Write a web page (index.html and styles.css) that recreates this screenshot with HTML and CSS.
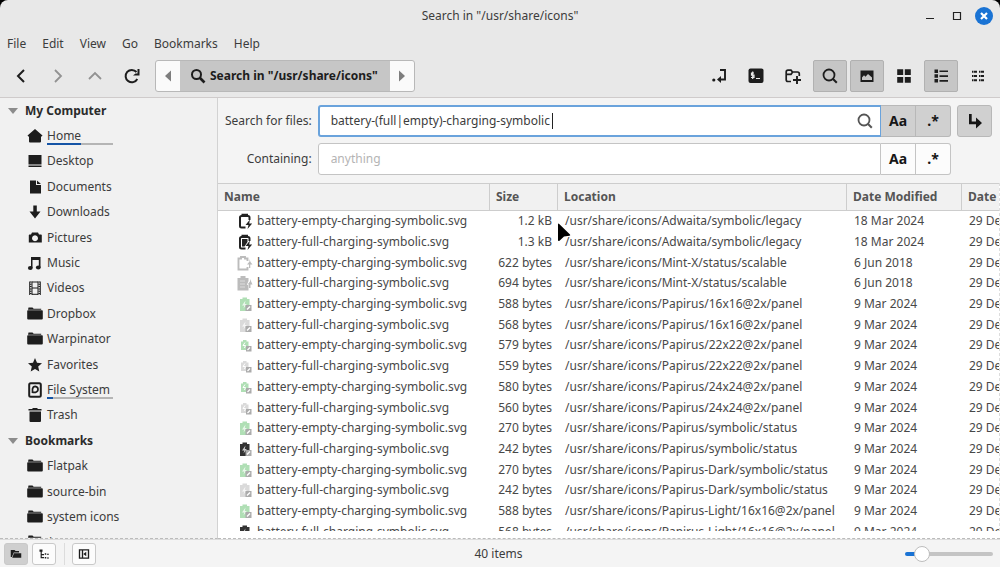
FILE: index.html
```
<!DOCTYPE html>
<html lang="en">
<head>
    <meta charset="UTF-8">
    <meta name="viewport" content="width=device-width, initial-scale=1.0">
    <title>Search in "/usr/share/icons"</title>
    <link rel="stylesheet" href="styles.css">
</head>
<body>
    <!-- shared icons -->
    <svg class="sprite" aria-hidden="true">
        <symbol id="folder" viewBox="0 0 16 16"><path d="M1.500 1.500h4l1.200 1.200h7.500v1.100H1z"/><path d="M1 4.300h14q.8 0 .8.800v7.400q0 1-1 1H1.200q-1 0-1-1V5.100q0-.8.800-.8z"/></symbol>
        <symbol id="search" viewBox="0 0 16 16"><circle cx="7" cy="7" r="5.500" fill="none" stroke="currentColor" stroke-width="1.800"/><path d="M10.800 10.800l4 4" stroke="currentColor" stroke-width="2"/></symbol>
        <symbol id="adw-empty" viewBox="0 0 16 16"><path d="M8.500 14.500H4.500Q3 14.500 3 13V4.500Q3 3 4.500 3h6.500Q12.500 3 12.500 4.500V7" fill="none" stroke="currentColor" stroke-width="2"/><path d="M4.500.8h6.500v2.500H4.500zM13 6.500L8.500 12h3l-1 4 4.700-5.500h-3z"/></symbol>
        <symbol id="adw-full" viewBox="0 0 16 16"><path d="M8.500 14.500H4.500Q3 14.500 3 13V4.500Q3 3 4.500 3h6.500Q12.500 3 12.500 4.500V7" fill="none" stroke="currentColor" stroke-width="2"/><path d="M4.500.8h6.500v2.500H4.500zM5 5h5.500v3l-3 4.500H5zM13 6.500L8.500 12h3l-1 4 4.700-5.500h-3z"/></symbol>
        <symbol id="mint-empty" viewBox="0 0 16 16"><path d="M8 14.500H1.500V3.500H4V2h4v1.500h2.500V6M10.500 12v2.500H8" fill="none" stroke="currentColor" stroke-width="1.900"/><path d="M12.500 4v2.500l-2.500 3h2v3.500h1.300V9.500H15.500l-2-2.500z"/></symbol>
        <symbol id="mint-full" viewBox="0 0 16 16"><path d="M.5 3H3.500V1h5v2h3v3l-1.700 4h1.700v5.500H.5z"/><path d="M3 6h5M3 9h5M3 12h5" stroke="#fff" stroke-width=".5"/><path d="M13 4v2.500l-2.500 3H12V13h1.500V9.500H15.500z"/></symbol>
        <symbol id="pap" viewBox="0 0 16 16"><path d="M3 3h2.500V1.500h4.500V3h2.500v12H3z"/><path d="M8.500 4.500L5 9.500h2.300L6.500 12.500l3.300-4.500H7.800z" fill="#fff" opacity=".75"/><path d="M8.500 9h6v6h-6z" fill="#ababab"/><path d="M10 13.500l3-3" stroke="#fff" stroke-width="1.400"/></symbol>
        <symbol id="pap-small" viewBox="0 0 16 16"><path d="M4 4.500h2V3h3.500v1.500h2V13H4z"/><path d="M8 5.500L6 8.500h2.500L7.500 11" stroke="#fff" fill="none"/><path d="M9 9h5.500v5.500H9z" fill="#ababab"/><path d="M10.500 13l2.500-2.500" stroke="#fff" stroke-width="1.300"/></symbol>
    </svg>

    <div class="window">
        <header class="titlebar">
            <h1>Search in "/usr/share/icons"</h1>
            <div class="window-controls">
                <button aria-label="Minimize"><svg viewBox="0 0 16 16"><path d="M4 10.500h8" stroke="currentColor"/></svg></button>
                <button aria-label="Maximize"><svg viewBox="0 0 16 16"><path d="M4.500 4.500h7v7h-7z" fill="none" stroke="currentColor" stroke-width="1.200"/></svg></button>
                <button class="close" aria-label="Close"><svg viewBox="0 0 16 16"><path d="M5 5l6 6M11 5l-6 6" stroke="currentColor" stroke-width="2.200"/></svg></button>
            </div>
        </header>

        <nav class="menubar">
            <button>File</button>
            <button>Edit</button>
            <button>View</button>
            <button>Go</button>
            <button>Bookmarks</button>
            <button>Help</button>
        </nav>

        <div class="toolbar">
            <div class="tools">
                <button class="tool" aria-label="Back"><svg viewBox="0 0 16 16"><path d="M11 2L5 8l6 6" fill="none" stroke="currentColor" stroke-width="2"/></svg></button>
                <button class="tool dim" aria-label="Forward"><svg viewBox="0 0 16 16"><path d="M5 2l6 6-6 6" fill="none" stroke="currentColor" stroke-width="1.800"/></svg></button>
                <button class="tool dim" aria-label="Up"><svg viewBox="0 0 16 16"><path d="M2 11l6-6 6 6" fill="none" stroke="currentColor" stroke-width="1.800"/></svg></button>
                <button class="tool" aria-label="Reload"><svg viewBox="0 0 16 16"><path d="M13.300 11A6.200 6.200 0 1 1 12.500 4" fill="none" stroke="currentColor" stroke-width="2"/><path d="M15.500 1v6.500H9l2.500-2h2V1z"/></svg></button>
            </div>
            <div class="pathbar">
                <button class="arrow" aria-label="Scroll left"><svg viewBox="0 0 16 16"><path d="M11 2.500v11L5 8z"/></svg></button>
                <button class="crumb"><svg viewBox="0 0 16 16"><circle cx="6.500" cy="6.500" r="4.500" fill="none" stroke="currentColor" stroke-width="2"/><path d="M9.500 9.500l5 5" stroke="currentColor" stroke-width="2.600"/></svg>Search in "/usr/share/icons"</button>
                <button class="arrow" aria-label="Scroll right"><svg viewBox="0 0 16 16"><path d="M5 2.500v11L11 8z"/></svg></button>
            </div>
            <div class="tools right">
                <button class="tool" aria-label="Toggle location entry"><svg viewBox="0 0 16 16"><path d="M9 2h5v9.500H8" fill="none" stroke="currentColor" stroke-width="1.900"/><path d="M10 8v7l-4-3.500z"/><circle cx="2.800" cy="12" r="1.600"/></svg></button>
                <button class="tool" aria-label="Open in terminal"><svg viewBox="0 0 16 16"><rect x=".5" y=".5" width="15" height="14.500" rx="2"/><path d="M6 5H3.500v2.200H6v2.300H3M4.700 3.500v7.500M8 10.500h4" fill="none" stroke="#e8e8e8" stroke-width="1.200"/></svg></button>
                <button class="tool" aria-label="New folder"><svg viewBox="0 0 16 16"><path d="M6 13.500H3Q1.200 13.500 1.200 11.800V4Q1.200 2.200 3 2.200H6L7.500 4h5Q14.300 4 14.300 5.800V8M1.500 6.300H6l1.500-2" fill="none" stroke="currentColor" stroke-width="1.700"/><path d="M12 8v8M8 12h8" stroke="currentColor" stroke-width="1.900"/></svg></button>
                <button class="tool on" aria-label="Search"><svg viewBox="0 0 16 16"><use href="#search"/></svg></button>
                <button class="tool on" aria-label="Show thumbnails"><svg viewBox="0 0 16 16"><path d="M1.500 2.500h13v11.500h-13z"/><path d="M3 12V9.500l2-2.200 1.500 1.500L9 6l4 3.500V12z" fill="#c6c6c6"/></svg></button>
                <button class="tool" aria-label="Icon view"><svg viewBox="0 0 16 16"><path d="M1.200 1.200h6V7h-6zM8.800 1.200h6V7h-6zM1.200 9h6v5.800h-6zM8.800 9h6v5.800h-6z"/></svg></button>
                <button class="tool on" aria-label="List view"><svg viewBox="0 0 16 16"><path d="M1.500 1.500h3.500V5H1.500zM1.500 6.300h3.500v3.500H1.500zM1.500 11h3.500v3.500H1.500zM6.500 2.400h8.500v1.700H6.500zM6.500 7.200h8.500v1.700H6.500zM6.500 12h8.500v1.700H6.500z"/></svg></button>
                <button class="tool" aria-label="Compact view"><svg viewBox="0 0 16 16"><path d="M2 3.700h5M9 3.700h5M2 8h5M9 8h5M2 12.300h5M9 12.300h5" stroke="currentColor" stroke-width="1.900" stroke-dasharray="1.500 .5 3 9"/></svg></button>
            </div>
        </div>

        <div class="content">
            <aside class="sidebar">
                <div class="places">
                    <h2>My Computer</h2>
                    <a href="#"><svg viewBox="0 0 16 16"><path d="M8 1l7.500 6.500-.8 1H14v5q0 1-1 1H3q-1 0-1-1v-5H1.300l-.8-1z"/></svg><span>Home</span><i class="usage"><i style="width: 51%"></i></i></a>
                    <a href="#"><svg viewBox="0 0 16 16"><path d="M1.500 2h13v9.500h-13zM1.500 12.500h13V14h-13z"/></svg><span>Desktop</span></a>
                    <a href="#"><svg viewBox="0 0 16 16"><path d="M3 1.500h6V6h5v8.500H3zM10 1.500L14 5h-4z"/></svg><span>Documents</span></a>
                    <a href="#"><svg viewBox="0 0 16 16"><path d="M6.300 1.500h3.500v6H13.500L8 14.500 2.500 7.500h3.800z"/></svg><span>Downloads</span></a>
                    <a href="#"><svg viewBox="0 0 16 16"><path fill-rule="evenodd" d="M5 2.500h6L12 4.500h2q.8 0 .8.800v7.200h-13V5.300q0-.8.800-.8H4zM8 5.300a3 3 0 1 0 .01 0z"/></svg><span>Pictures</span></a>
                    <a href="#"><svg viewBox="0 0 16 16"><path d="M4 2h9.500v10.500h-1.700V5H5.500v8H4z"/><ellipse cx="3.300" cy="13" rx="2.400" ry="1.900"/><ellipse cx="11.300" cy="12.500" rx="2.400" ry="1.900"/></svg><span>Music</span></a>
                    <a href="#"><svg viewBox="0 0 16 16"><path d="M2.700 1.500v13.500M13.300 1.500v13.500M5 1.500v13.500M11 1.500v13.500M5 2h6M5 8h6M5 14.300h6" fill="none" stroke="currentColor"/><path d="M3.800 1.500v13.500M12.200 1.500v13.500" stroke="currentColor" stroke-width="1.600" stroke-dasharray="1 1.300"/></svg><span>Videos</span></a>
                    <a href="#"><svg><use href="#folder"/></svg><span>Dropbox</span></a>
                    <a href="#"><svg><use href="#folder"/></svg><span>Warpinator</span></a>
                    <a href="#"><svg viewBox="0 0 16 16"><path d="M8 1l2 4.700 5 .5-3.800 3.400 1.100 5L8 12l-4.300 2.600 1.100-5L1 6.200l5-.5z"/></svg><span>Favorites</span></a>
                    <a href="#"><svg viewBox="0 0 16 16"><rect x="2.200" y="1.200" width="11.600" height="13.600" rx="1.500" fill="none" stroke="currentColor" stroke-width="2"/><path d="M5.500 11V7Q6 4.300 8.300 4.300q2.700.3 2.700 3 0 2.500-2.500 3H5.500" fill="none" stroke="currentColor" stroke-width="1.700"/></svg><span>File System</span><i class="usage"><i style="width: 9%"></i></i></a>
                    <a href="#"><svg viewBox="0 0 16 16"><path d="M5.500 1h5v1h4v1.500h-13V2h4zM2.500 4.500h11.500V14q0 1-1 1H3.500q-1 0-1-1z"/></svg><span>Trash</span></a>
                    <h2>Bookmarks</h2>
                    <a href="#"><svg><use href="#folder"/></svg><span>Flatpak</span></a>
                    <a href="#"><svg><use href="#folder"/></svg><span>source-bin</span></a>
                    <a href="#"><svg><use href="#folder"/></svg><span>system icons</span></a>
                    <a href="#"><svg><use href="#folder"/></svg><span>/</span></a>
                </div>
            </aside>

            <main class="main">
                <form class="search">
                    <label for="files">Search for files:</label>
                    <div class="field">
                        <div class="entry focused">
                            <input type="text" id="files" value="battery-(full|empty)-charging-symbolic">
                            <span class="caret"></span>
                            <svg viewBox="0 0 16 16"><use href="#search"/></svg>
                        </div>
                        <button type="button" class="option on">Aa</button>
                        <button type="button" class="option on last">.*</button>
                        <button type="button" class="option on recurse" aria-label="Search subfolders"><svg viewBox="0 0 16 16"><path d="M2 1h2.700v7.500H9V4.500l6 5.500-6 5.500v-4.200H2z"/></svg></button>
                    </div>
                    <label for="containing">Containing:</label>
                    <div class="field">
                        <div class="entry">
                            <input type="text" id="containing" placeholder="anything">
                        </div>
                        <button type="button" class="option">Aa</button>
                        <button type="button" class="option last">.*</button>
                    </div>
                </form>

                <div class="files">
                    <table>
                        <colgroup>
                            <col class="col-name"><col class="col-size"><col class="col-location"><col class="col-date"><col>
                        </colgroup>
                        <thead>
                            <tr><th>Name</th><th>Size</th><th>Location</th><th>Date Modified</th><th>Date</th></tr>
                        </thead>
                        <tbody>
                            <tr><td><svg><use href="#adw-empty"/></svg>battery-empty-charging-symbolic.svg</td><td>1.2 kB</td><td>/usr/share/icons/Adwaita/symbolic/legacy</td><td>18 Mar 2024</td><td>29 Dec</td></tr>
                            <tr><td><svg><use href="#adw-full"/></svg>battery-full-charging-symbolic.svg</td><td>1.3 kB</td><td>/usr/share/icons/Adwaita/symbolic/legacy</td><td>18 Mar 2024</td><td>29 Dec</td></tr>
                            <tr><td><svg class="grey"><use href="#mint-empty"/></svg>battery-empty-charging-symbolic.svg</td><td>622 bytes</td><td>/usr/share/icons/Mint-X/status/scalable</td><td>6 Jun 2018</td><td>29 Dec</td></tr>
                            <tr><td><svg class="grey"><use href="#mint-full"/></svg>battery-full-charging-symbolic.svg</td><td>694 bytes</td><td>/usr/share/icons/Mint-X/status/scalable</td><td>6 Jun 2018</td><td>29 Dec</td></tr>
                            <tr><td><svg class="green"><use href="#pap"/></svg>battery-empty-charging-symbolic.svg</td><td>588 bytes</td><td>/usr/share/icons/Papirus/16x16@2x/panel</td><td>9 Mar 2024</td><td>29 Dec</td></tr>
                            <tr><td><svg class="pale"><use href="#pap"/></svg>battery-full-charging-symbolic.svg</td><td>568 bytes</td><td>/usr/share/icons/Papirus/16x16@2x/panel</td><td>9 Mar 2024</td><td>29 Dec</td></tr>
                            <tr><td><svg class="green"><use href="#pap-small"/></svg>battery-empty-charging-symbolic.svg</td><td>579 bytes</td><td>/usr/share/icons/Papirus/22x22@2x/panel</td><td>9 Mar 2024</td><td>29 Dec</td></tr>
                            <tr><td><svg class="pale"><use href="#pap-small"/></svg>battery-full-charging-symbolic.svg</td><td>559 bytes</td><td>/usr/share/icons/Papirus/22x22@2x/panel</td><td>9 Mar 2024</td><td>29 Dec</td></tr>
                            <tr><td><svg class="green"><use href="#pap-small"/></svg>battery-empty-charging-symbolic.svg</td><td>580 bytes</td><td>/usr/share/icons/Papirus/24x24@2x/panel</td><td>9 Mar 2024</td><td>29 Dec</td></tr>
                            <tr><td><svg class="pale"><use href="#pap-small"/></svg>battery-full-charging-symbolic.svg</td><td>560 bytes</td><td>/usr/share/icons/Papirus/24x24@2x/panel</td><td>9 Mar 2024</td><td>29 Dec</td></tr>
                            <tr><td><svg class="green"><use href="#pap"/></svg>battery-empty-charging-symbolic.svg</td><td>270 bytes</td><td>/usr/share/icons/Papirus/symbolic/status</td><td>9 Mar 2024</td><td>29 Dec</td></tr>
                            <tr><td><svg class="dark"><use href="#pap"/></svg>battery-full-charging-symbolic.svg</td><td>242 bytes</td><td>/usr/share/icons/Papirus/symbolic/status</td><td>9 Mar 2024</td><td>29 Dec</td></tr>
                            <tr><td><svg class="green"><use href="#pap"/></svg>battery-empty-charging-symbolic.svg</td><td>270 bytes</td><td>/usr/share/icons/Papirus-Dark/symbolic/status</td><td>9 Mar 2024</td><td>29 Dec</td></tr>
                            <tr><td><svg class="pale"><use href="#pap"/></svg>battery-full-charging-symbolic.svg</td><td>242 bytes</td><td>/usr/share/icons/Papirus-Dark/symbolic/status</td><td>9 Mar 2024</td><td>29 Dec</td></tr>
                            <tr><td><svg class="green"><use href="#pap"/></svg>battery-empty-charging-symbolic.svg</td><td>588 bytes</td><td>/usr/share/icons/Papirus-Light/16x16@2x/panel</td><td>9 Mar 2024</td><td>29 Dec</td></tr>
                            <tr><td><svg class="dark"><use href="#pap"/></svg>battery-full-charging-symbolic.svg</td><td>568 bytes</td><td>/usr/share/icons/Papirus-Light/16x16@2x/panel</td><td>9 Mar 2024</td><td>29 Dec</td></tr>
                        </tbody>
                    </table>
                    <svg class="pointer" viewBox="0 0 16 20"><path d="M1 1.500Q1 0 2.200 1L13 11.500q.8 1-.5 1.200L7 13.500l-4.500 4.200Q1 18.500 1 17z"/></svg>
                </div>
                <div class="overshoot"></div>
            </main>
        </div>

        <footer class="statusbar">
            <div class="status-buttons">
                <button class="on" aria-label="Show places"><svg viewBox="0 0 16 16"><path d="M1 2.500h5l1.500 1.500H12V6H5L2.500 12H1z"/><path d="M5.300 7H15v6H3z"/></svg></button>
                <button aria-label="Show treeview"><svg viewBox="0 0 16 16"><path d="M2 2h4v3H5v3h3v1.500H5V12h3v1.500H3.500V5H2zM9 7h2v2H9zM9 12h2v2H9zM12 7.500h2.500v1.500H12zM12 12.500h2.500V14H12z"/></svg></button>
                <span class="divider"></span>
                <button aria-label="Hide sidebar"><svg viewBox="0 0 16 16"><path d="M2 2.500h12v11H2zM6 3v10" fill="none" stroke="currentColor" stroke-width="1.800"/><path d="M11 5v6L7 8z"/></svg></button>
            </div>
            <span class="count">40 items</span>
            <input type="range" class="zoom" min="0" max="8" value="1" aria-label="Zoom">
        </footer>
    </div>
</body>
</html>
```
FILE: styles.css
```
:root {
    --bar-bg: #e8e8e8;
    --pane-bg: #f4f4f4;
    --side-bg: #f1f1f1;
    --pressed: #c6c6c6;
    --border: #c4c4c4;
    --text: #3c3c3c;
    --icon: #1d1d1d;
    --accent: #1a73d4;
}

* {
    box-sizing: border-box;
}

body {
    margin: 0;
    background: #000;
    color: var(--text);
    font-family: "Noto Sans", "Open Sans", sans-serif;
    font-size: 12px;
    line-height: 20px;
}

button,
input {
    font: inherit;
    color: inherit;
}

button {
    display: flex;
    align-items: center;
    justify-content: center;
    padding: 0;
    border: 0;
    background: none;
}

svg {
    flex: none;
    width: 16px;
    height: 16px;
    fill: currentColor;
}

.sprite {
    display: none;
}

.window {
    display: flex;
    flex-direction: column;
    height: 100vh;
    overflow: hidden;
    border-radius: 8px 8px 0 0;
    background: var(--bar-bg);
}

/* Title bar */
.titlebar {
    display: grid;
    grid-template-columns: 1fr auto 1fr;
    align-items: center;
    height: 31px;
    padding: 0 7px;
}

.titlebar h1 {
    grid-column: 2;
    margin: 0;
    font-size: 12px;
    font-weight: normal;
}

.window-controls {
    display: flex;
    justify-content: flex-end;
    gap: 9px;
    color: #222;
}

.window-controls button {
    width: 18px;
    height: 18px;
}

.window-controls .close {
    border-radius: 50%;
    background: var(--accent);
    color: #fff;
}

/* Menu bar */
.menubar {
    display: flex;
    gap: 16px;
    height: 27px;
    padding: 0 7px 2px;
}

/* Toolbar */
.toolbar {
    display: flex;
    height: 40px;
    padding: 2px 5px 5px 4px;
    border-bottom: 1px solid #cfcbcb;
    color: var(--icon);
}

.tools {
    display: flex;
    gap: 3px;
}

.tools.right {
    margin-left: auto;
}

.tool {
    width: 34px;
    height: 32px;
    border-radius: 2px;
}

.tool.dim {
    color: #929292;
}

.tool.on {
    border: 1px solid #b1b1b1;
    background: var(--pressed);
}

.pathbar {
    display: flex;
    height: 32px;
    margin-left: 6px;
    border: 1px solid #b8b8b8;
    border-radius: 3px;
    background: #fafafa;
    overflow: hidden;
}

.arrow {
    width: 24px;
    color: #7d7d7d;
}

.crumb {
    gap: 4px;
    padding: 0 12px 0 10px;
    background: var(--pressed);
    font-weight: bold;
}

/* Sidebar */
.content {
    display: flex;
    flex: 1;
    min-height: 0;
}

.sidebar {
    flex: none;
    width: 218px;
    overflow: hidden;
    border-right: 1px solid #d2d2d2;
    border-bottom: 1px dashed #bbb;
    background: var(--side-bg);
}

.places {
    display: grid;
    grid-auto-rows: 1fr;
    height: 457px;
}

.places h2 {
    display: flex;
    align-items: center;
    gap: 7px;
    margin: 0;
    padding-left: 8px;
    color: #2b2b2b;
    font-size: 12px;
}

.places h2::before {
    content: "";
    border: 5px solid transparent;
    border-top: 6px solid #8c8c8c;
    border-bottom: 0;
}

.places a {
    position: relative;
    display: flex;
    align-items: center;
    gap: 4px;
    padding-left: 27px;
    color: inherit;
    text-decoration: none;
}

.places svg {
    color: var(--icon);
}

.usage {
    position: absolute;
    left: 47px;
    bottom: 4px;
    width: 66px;
    height: 2px;
    background: #b5b5b5;
}

.usage i {
    display: block;
    height: 2px;
    background: #1554a6;
}

/* Search form */
.main {
    display: flex;
    flex: 1;
    flex-direction: column;
    min-width: 0;
    background: #fff;
}

.search {
    display: grid;
    grid-template-columns: auto 1fr;
    gap: 6px;
    align-items: center;
    padding: 7px 8px 8px 7px;
    background: var(--pane-bg);
}

.search label {
    text-align: right;
}

.field {
    display: flex;
    min-width: 0;
    height: 32px;
}

.field:last-child {
    margin-right: 41px;
}

.entry {
    position: relative;
    display: flex;
    flex: 1;
    align-items: center;
    padding: 0 7px 0 12px;
    border: 1px solid var(--border);
    border-radius: 3px 0 0 3px;
    background: #fff;
}

.entry.focused {
    border: 2px solid #6aa3dc;
    border-right-width: 1px;
    padding-left: 11px;
}

.entry input {
    flex: 1;
    min-width: 0;
    padding: 0;
    border: 0;
    outline: 0;
    background: none;
}

.entry input::placeholder {
    color: #b4b4b4;
}

.entry svg {
    color: #555;
}

.caret {
    position: absolute;
    left: 232px;
    width: 1px;
    height: 16px;
    background: #222;
}

.option {
    width: 35px;
    border: 1px solid var(--border);
    border-left: 0;
    background: #fcfcfc;
    color: #161616;
    font-size: 14px;
    font-weight: bold;
}

.option.on {
    border-color: #b8b8b8;
    background: #d0d0d0;
}

.option.last {
    border-radius: 0 3px 3px 0;
}

.option.recurse {
    margin-left: 6px;
    border-left: 1px solid #b8b8b8;
    border-radius: 3px;
}

/* File list */
.files {
    position: relative;
    flex: 1;
    min-height: 0;
    overflow: hidden;
    border-right: 1px dashed #ddd;
}

table {
    width: 100%;
    height: 359px;
    border-collapse: separate;
    border-spacing: 0;
    table-layout: fixed;
}

.col-name {
    width: 272px;
}

.col-size {
    width: 68px;
}

.col-location {
    width: 289px;
}

.col-date {
    width: 115px;
}

th,
td {
    overflow: hidden;
    padding: 0 6px;
    white-space: nowrap;
}

th {
    height: 28px;
    border: solid #cdcdcd;
    border-width: 1px 1px 1px 0;
    background: var(--side-bg);
    color: #555;
    text-align: left;
}

td:last-child,
th:last-child {
    padding-right: 0;
    border-right: 0;
}

td {
    padding-left: 7px;
    color: #484848;
}

td:first-child {
    padding-left: 19px;
}

td:nth-child(2) {
    padding-left: 0;
    text-align: right;
}

td svg {
    margin-right: 4px;
    color: #222;
    vertical-align: -4px;
}

td .grey {
    color: #bcbcbc;
}

td .green {
    color: #b0dfb5;
}

td .pale {
    color: #dadada;
}

td .dark {
    color: #333;
}

.pointer {
    position: absolute;
    top: 40px;
    left: 339px;
    width: 16px;
    height: 20px;
    color: #000;
}

.overshoot {
    flex: none;
    height: 8px;
    border-bottom: 1px dashed #bbb;
}

/* Status bar */
.statusbar {
    display: grid;
    grid-template-columns: 1fr auto 1fr;
    align-items: center;
    height: 28px;
    padding: 0 7px 0 4px;
    border-top: 1px solid #dcdcdc;
    background: var(--pane-bg);
}

.status-buttons {
    display: flex;
    gap: 4px;
}

.status-buttons button {
    width: 24px;
    height: 22px;
    border: 1px solid #c9c9c9;
    border-radius: 3px;
    background: #fcfcfc;
    color: var(--icon);
}

.status-buttons button.on {
    background: #cfcfcf;
}

.status-buttons svg {
    width: 12px;
    height: 12px;
}

.divider {
    width: 1px;
    margin: 0 3px 0 4px;
    background: #dcdcdc;
}

.zoom {
    justify-self: end;
    width: 88px;
    height: 16px;
    margin: 0;
    appearance: none;
    background: none;
}

.zoom::-webkit-slider-runnable-track {
    height: 4px;
    border-radius: 2px;
    background: linear-gradient(to right, var(--accent) 17px, #c4c4c4 17px);
}

.zoom::-webkit-slider-thumb {
    width: 16px;
    height: 16px;
    margin-top: -6px;
    appearance: none;
    border: 1px solid #bdbdbd;
    border-radius: 50%;
    background: #fff;
}
```
